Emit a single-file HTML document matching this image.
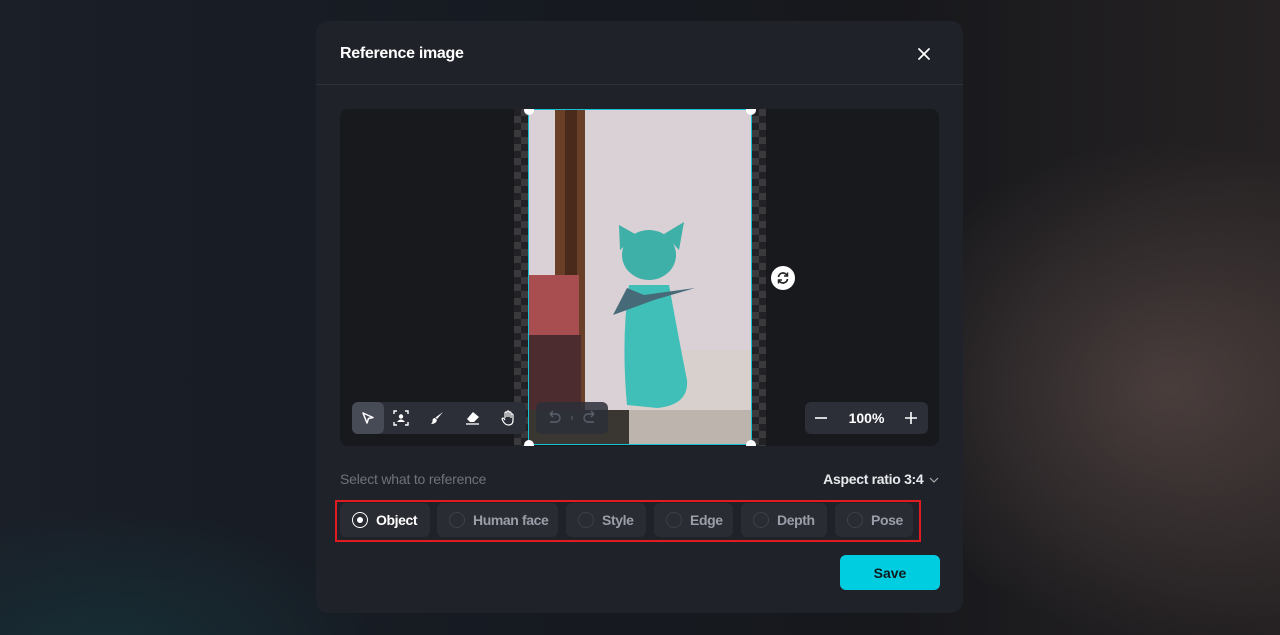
<!DOCTYPE html>
<html><head><meta charset="utf-8">
<style>
*{margin:0;padding:0;box-sizing:border-box}
body{width:1280px;height:635px;overflow:hidden;font-family:"Liberation Sans",sans-serif;position:relative;
background:#15171c;}
.bg{position:absolute;inset:0;
background:
radial-gradient(ellipse 300px 250px at 1170px 390px,rgba(100,82,78,.6),rgba(0,0,0,0)),
radial-gradient(ellipse 280px 140px at 110px 650px,rgba(20,65,70,.45),rgba(0,0,0,0)),
linear-gradient(90deg,#1a1f28 0%,#161a21 40%,#17181c 70%,#262223 100%);}
.modal{position:absolute;left:316px;top:21px;width:647px;height:592px;background:#202229;border-radius:12px;}
.hdr{height:64px;border-bottom:1px solid #2e3038;position:relative}
.title{position:absolute;left:24px;top:24px;color:#fff;font-size:16px;font-weight:bold;letter-spacing:-0.3px}
.close{position:absolute;left:600px;top:25px}
.canvas{position:absolute;left:24px;top:88px;width:599px;height:337px;background:#18191d;border-radius:8px;overflow:hidden}
.checker{position:absolute;top:0;width:14px;height:337px;
background-image:linear-gradient(45deg,#3a3a3c 25%,transparent 25%,transparent 75%,#3a3a3c 75%),linear-gradient(45deg,#3a3a3c 25%,transparent 25%,transparent 75%,#3a3a3c 75%);
background-size:14px 14px;background-position:0 0,7px 7px;background-color:#222226}
.img{position:absolute;left:188px;top:0;width:224px;height:336px;border:1.5px solid #17c2d4;overflow:hidden;background:#dcd4d8}
.handle{position:absolute;width:10px;height:10px;border-radius:50%;background:#fff}
.tb{position:absolute;top:293px;height:32px;background:#2c2f38;border-radius:6px;display:flex;align-items:center}
.tb .b{width:36px;height:32px;display:flex;align-items:center;justify-content:center}
.sel{font-size:14px;color:#6e727c;position:absolute;left:24px;top:450px;letter-spacing:-0.2px}
.ar{position:absolute;right:24px;top:450px;font-size:14px;color:#e8e9ec;font-weight:bold;letter-spacing:-0.3px}
.chips{position:absolute;left:24px;top:482px;display:flex}
.chip{height:34px;background:#2a2c33;border-radius:6px;display:flex;align-items:center;padding:0 12px;margin-right:8px;font-size:14px;font-weight:bold;color:#9a9ea8;white-space:nowrap;letter-spacing:-0.4px;flex-shrink:0}
.chip .r{width:16px;height:16px;border-radius:50%;border:1.5px solid #3d4049;margin-right:8px;flex-shrink:0}
.chip.on{color:#fff}
.chip.on .r{border-color:#fff;display:flex;align-items:center;justify-content:center}
.chip.on .r:after{content:"";width:6px;height:6px;background:#fff;border-radius:50%}
.red{position:absolute;left:19px;top:479px;width:586px;height:42px;border:2px solid #e01b22}
.save{position:absolute;left:524px;top:534px;width:100px;height:35px;background:#00cde0;border-radius:6px;color:#0d1a1f;font-weight:bold;font-size:14px;display:flex;align-items:center;justify-content:center}
</style></head><body>
<div class="bg"></div>
<div class="modal">
 <div class="hdr"><div class="title">Reference image</div>
 <svg class="close" width="16" height="16" viewBox="0 0 16 16"><path d="M3 3L13 13M13 3L3 13" stroke="#fff" stroke-width="1.8" stroke-linecap="round"/></svg></div>
 <div class="canvas">
  <div class="checker" style="left:174px"></div>
  <div class="checker" style="left:412px"></div>
  <div class="img">
   <svg width="224" height="336" viewBox="0 0 224 336">
    <rect width="224" height="336" fill="#dad1d6"/>
    <rect x="26" y="0" width="30" height="336" fill="#6a3f28"/>
    <rect x="36" y="0" width="12" height="336" fill="#4a2a1a"/>
    <rect x="0" y="165" width="50" height="60" fill="#a84d50"/>
    <rect x="0" y="225" width="52" height="111" fill="#4d2c2f"/>
    <rect x="0" y="300" width="110" height="36" fill="#3a3632"/>
    <rect x="100" y="240" width="124" height="60" fill="#d8d0cc"/>
    <rect x="100" y="300" width="124" height="36" fill="#bdb4ae"/>
    <ellipse cx="120" cy="145" rx="27" ry="25" fill="#3fb0a8"/>
    <path d="M91 140L90 115L108 125Z M150 140L155 112L135 124Z" fill="#3fb0a8"/>
    <path d="M100 175Q92 230 98 295L128 298Q160 295 158 270Q150 230 140 175Z" fill="#3fbfb8"/>
    <path d="M98 178L84 205L125 190L166 178L115 185Z" fill="#466a78"/>
   </svg>
  </div>
  <div class="handle" style="left:184px;top:-4px"></div>
  <div class="handle" style="left:406px;top:-4px"></div>
  <div class="handle" style="left:184px;top:331px"></div>
  <div class="handle" style="left:406px;top:331px"></div>
  <div style="position:absolute;left:431px;top:157px;width:24px;height:24px;border-radius:50%;background:#fff;display:flex;align-items:center;justify-content:center">
   <svg width="14" height="14" viewBox="0 0 14 14"><path d="M2.5 6A4.5 4.5 0 0 1 11 4.5M11.5 8A4.5 4.5 0 0 1 3 9.5" stroke="#222" stroke-width="1.7" fill="none"/><path d="M11.5 1.5V5H8M2.5 12.5V9H6" stroke="#222" stroke-width="1.5" fill="none"/></svg></div>
  <div class="tb" style="left:12px;width:174px">
   <div class="b" style="background:#474b56;border-radius:6px;width:32px"><svg width="14" height="14" viewBox="0 0 14 14"><path d="M2 2L12 6.5L7.5 7.5L6 12Z" stroke="#fff" stroke-width="1.5" fill="none" stroke-linejoin="round"/></svg></div>
   <div class="b"><svg width="16" height="16" viewBox="0 0 16 16"><path d="M1 4V1H4M12 1H15V4M15 12V15H12M4 15H1V12" stroke="#fff" stroke-width="1.4" fill="none"/><circle cx="8" cy="6.5" r="2.2" fill="#fff"/><path d="M4 12Q8 7 12 12Z" fill="#fff"/></svg></div>
   <div class="b"><svg width="14" height="14" viewBox="0 0 14 14"><path d="M13 1L7 8L5.5 6.5Z" fill="#fff"/><path d="M5 7L7 9Q6 13 1 13Q3 11 2.5 9Q3 7 5 7Z" fill="#fff"/></svg></div>
   <div class="b"><svg width="15" height="14" viewBox="0 0 15 14"><path d="M8 1L14 6L9 11H5L2 8Z" fill="#fff"/><path d="M1 13H14" stroke="#fff" stroke-width="1.3"/></svg></div>
   <div class="b"><svg width="14" height="16" viewBox="0 0 14 16"><path d="M4 8V3a1 1 0 0 1 2 0V7V2a1 1 0 0 1 2 0V7V3a1 1 0 0 1 2 0V8V5a1 1 0 0 1 2 0V10Q12 15 7.5 15Q4 15 2 11L1 9Q1.5 7.5 3 8.5L4 10" stroke="#fff" stroke-width="1.2" fill="none"/></svg></div>
  </div>
  <div class="tb" style="left:196px;width:72px;background:rgba(44,47,56,.85)">
   <svg width="72" height="16" viewBox="0 0 72 16"><path d="M14 4H20a4 4 0 0 1 0 8H14M14 4L17 1M14 4L17 7" stroke="#5c606b" stroke-width="1.4" fill="none"/><path d="M36 6V10" stroke="#5c606b"/><path d="M58 4H52a4 4 0 0 0 0 8H58M58 4L55 1M58 4L55 7" stroke="#5c606b" stroke-width="1.4" fill="none"/></svg>
  </div>
  <div class="tb" style="left:465px;width:123px">
   <svg width="123" height="16" viewBox="0 0 123 16"><path d="M10 8H22" stroke="#fff" stroke-width="1.6"/><path d="M100 8H112M106 2V14" stroke="#fff" stroke-width="1.6"/></svg>
   <span style="position:absolute;left:0;width:123px;text-align:center;color:#fff;font-size:14px;font-weight:bold">100%</span>
  </div>
 </div>
 <div class="sel">Select what to reference</div>
 <div class="ar">Aspect ratio 3:4 <svg width="10" height="8" viewBox="0 0 10 8" style="margin-left:2px"><path d="M1 2L5 6L9 2" stroke="#aaa" stroke-width="1.2" fill="none"/></svg></div>
 <div class="chips">
  <div class="chip on" style="width:90px"><div class="r"></div>Object</div>
  <div class="chip" style="width:121px;margin-left:-1px"><div class="r"></div>Human face</div>
  <div class="chip" style="width:80px"><div class="r"></div>Style</div>
  <div class="chip" style="width:79px"><div class="r"></div>Edge</div>
  <div class="chip" style="width:86px"><div class="r"></div>Depth</div>
  <div class="chip" style="width:78px"><div class="r"></div>Pose</div>
 </div>
 <div class="red"></div>
 <div class="save">Save</div>
</div>
</body></html>
